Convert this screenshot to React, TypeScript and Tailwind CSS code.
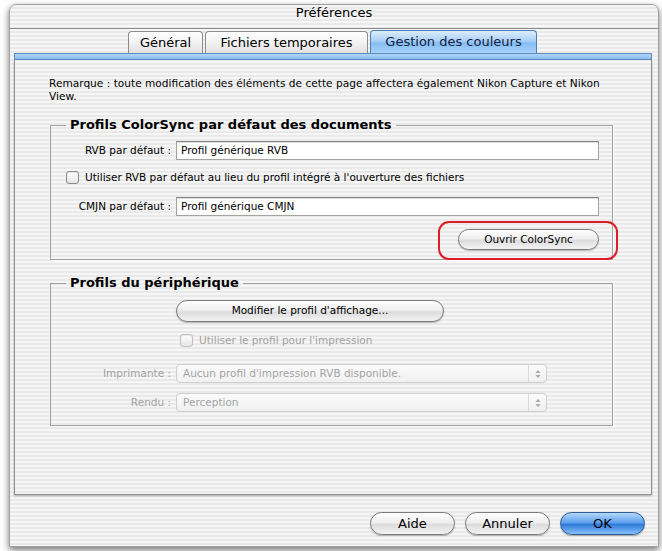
const stripes =
  "bg-[repeating-linear-gradient(180deg,#f6f6f6_0px,#f6f6f6_2px,#e9e9e9_2px,#e9e9e9_4px)]";

function Pill({ label, className = "" }: { label: string; className?: string }) {
  return (
    <button
      className={`rounded-full border border-[#7b7b7b] bg-[linear-gradient(#fefefe,#efefef_45%,#dcdcdc_55%,#f3f3f3)] shadow-[0_1px_1px_rgba(0,0,0,0.25)] text-black ${className}`}
    >
      {label}
    </button>
  );
}

function Field({ label, value }: { label: string; value: string }) {
  return (
    <div className="flex items-center h-[19px]">
      <div className="w-[122px] text-right pr-[2px] whitespace-nowrap">{label}</div>
      <div className="ml-[3px] flex-1 mr-[13px] h-[19px] bg-white border border-[#a3a3a3] border-t-[#808080] shadow-[inset_0_1px_1px_rgba(0,0,0,0.12)] pl-[4px] flex items-center">
        {value}
      </div>
    </div>
  );
}

function Checkbox({ disabled = false }: { disabled?: boolean }) {
  return (
    <span
      className={`inline-block w-[13px] h-[13px] rounded-[3px] border bg-[linear-gradient(#ffffff,#e6e6e6)] shadow-[inset_0_1px_1px_rgba(0,0,0,0.1)] ${
        disabled ? "border-[#c2c2c2]" : "border-[#8a8a8a]"
      }`}
    />
  );
}

function Popup({ label, value }: { label: string; value: string }) {
  return (
    <div className="flex items-center h-[19px] text-[#a3a3a3]">
      <div className="w-[122px] text-right pr-[2px] whitespace-nowrap">{label}</div>
      <div className="ml-[3px] w-[371px] h-[19px] rounded-[4px] border border-[#cfcfcf] bg-[linear-gradient(#fbfbfb,#f0f0f0)] flex items-center">
        <span className="flex-1 pl-[6px]">{value}</span>
        <span className="w-[18px] h-full border-l border-[#dadada] flex items-center justify-center">
          <svg width="6" height="10" viewBox="0 0 6 10">
            <path d="M3 1 L5.5 4 H0.5 Z" fill="#a8a8a8" />
            <path d="M3 9 L5.5 6 H0.5 Z" fill="#a8a8a8" />
          </svg>
        </span>
      </div>
    </div>
  );
}

function Group({ title, children }: { title: string; children: React.ReactNode }) {
  return (
    <fieldset className="ml-[35px] w-[563px] border border-[#a2a2a2] shadow-[1px_1px_0_rgba(255,255,255,0.8)] px-0">
      <legend className="ml-[15px] px-[4px] text-[13px] font-bold leading-[16px] text-black">
        {title}
      </legend>
      {children}
    </fieldset>
  );
}

export default function App() {
  return (
    <div className="w-[662px] h-[551px] overflow-hidden bg-white pt-[4px] pl-[9px] font-['DejaVu_Sans',sans-serif] text-[10.5px] text-black">
      <div
        className={`w-[650px] h-[543px] rounded-t-[7px] border border-[#a0a0a0] shadow-[0_3px_7px_rgba(0,0,0,0.55)] flex flex-col ${stripes}`}
      >
        {/* title bar */}
        <div className="h-[24px] shrink-0 border-b border-[#8a8a8a] flex justify-center text-[13px] leading-[15px]">
          Préférences
        </div>

        {/* tabs */}
        <div className="h-[24px] shrink-0 flex items-end pl-[118px] gap-[2px] text-[13px]">
          <div className="w-[75px] h-[22px] rounded-t-[4px] border border-b-0 border-[#8c8c8c] bg-[linear-gradient(#ffffff,#f2f2f2_50%,#e2e2e2)] flex items-center justify-center">
            Général
          </div>
          <div className="w-[163px] h-[22px] rounded-t-[4px] border border-b-0 border-[#8c8c8c] bg-[linear-gradient(#ffffff,#f2f2f2_50%,#e2e2e2)] flex items-center justify-center">
            Fichiers temporaires
          </div>
          <div className="w-[167px] h-[23px] rounded-t-[4px] border border-b-0 border-[#4f7fb7] bg-[linear-gradient(#dcecfc,#a9d0f6_45%,#86bdf2_55%,#a6d2fb)] flex items-center justify-center text-[#10213f]">
            Gestion des couleurs
          </div>
        </div>

        {/* blue bar */}
        <div className="ml-[4px] mr-[6px] h-[7px] shrink-0 border border-[#5f8cc0] bg-[linear-gradient(#b4d6f8,#86bcef)]" />

        {/* content panel */}
        <div className="ml-[4px] mr-[6px] h-[435px] shrink-0 border-x border-b border-[#8e8e8e] shadow-[0_1px_2px_rgba(0,0,0,0.25)] pt-[17px]">
          <p className="pl-[34px] leading-[13px] whitespace-nowrap text-[10.6px]">
            Remarque : toute modification des éléments de cette page affectera également Nikon Capture et Nikon
            <br />
            View.
          </p>

          <div className="mt-[14px]">
            <Group title="Profils ColorSync par défaut des documents">
              <div className="mt-[8px]">
                <Field label="RVB par défaut :" value="Profil générique RVB" />
              </div>
              <div className="mt-[11px] flex items-center gap-[6px] pl-[15px] h-[13px]">
                <Checkbox />
                <span>Utiliser RVB par défaut au lieu du profil intégré à l'ouverture des fichiers</span>
              </div>
              <div className="mt-[13px]">
                <Field label="CMJN par défaut :" value="Profil générique CMJN" />
              </div>
              <div className="mt-[13px] mb-[9px] flex justify-end pr-[13px]">
                <div className="relative">
                  <Pill label="Ouvrir ColorSync" className="w-[141px] h-[21px] text-[10.5px]" />
                  <div className="absolute -left-[20px] -right-[19px] -top-[8px] -bottom-[10px] rounded-[11px] border-2 border-[#dc1f26] pointer-events-none" />
                </div>
              </div>
            </Group>
          </div>

          <div className="mt-[15px]">
            <Group title="Profils du périphérique">
              <div className="mt-[9px] pl-[125px]">
                <Pill label="Modifier le profil d'affichage..." className="w-[268px] h-[22px] text-[10.5px]" />
              </div>
              <div className="mt-[12px] pl-[129px] flex items-center gap-[6px] h-[13px] text-[#a3a3a3]">
                <Checkbox disabled />
                <span>Utiliser le profil pour l'impression</span>
              </div>
              <div className="mt-[17px]">
                <Popup label="Imprimante :" value="Aucun profil d'impression RVB disponible." />
              </div>
              <div className="mt-[10px] mb-[13px]">
                <Popup label="Rendu :" value="Perception" />
              </div>
            </Group>
          </div>
        </div>

        {/* footer buttons */}
        <div className="flex justify-end items-center gap-[10px] pr-[13px] pt-[17px] text-[13px]">
          <Pill label="Aide" className="w-[85px] h-[23px]" />
          <Pill label="Annuler" className="w-[85px] h-[23px]" />
          <button className="w-[85px] h-[23px] rounded-full border border-[#2f5a93] bg-[linear-gradient(#b3d8fb,#5fa1ec_45%,#2f7bdb_55%,#86c0fa)] shadow-[0_1px_1px_rgba(0,0,0,0.3)] text-black">
            OK
          </button>
        </div>
      </div>
    </div>
  );
}
